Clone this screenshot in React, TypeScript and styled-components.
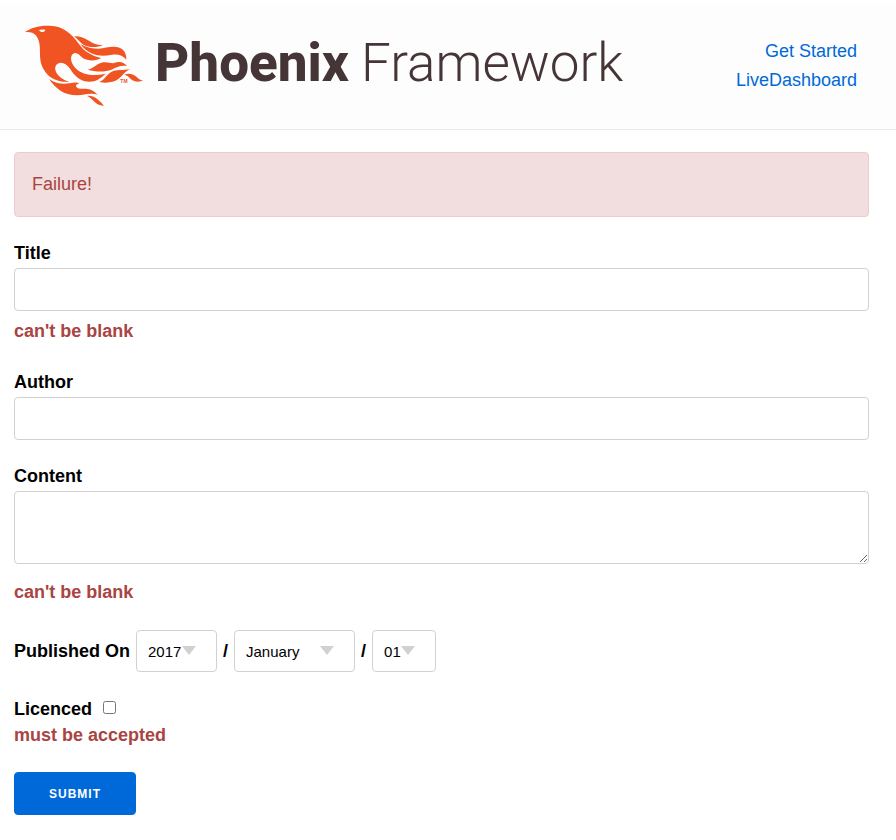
import React from "react";
import styled, { createGlobalStyle } from "styled-components";

const GlobalStyle = createGlobalStyle`
  *, *::before, *::after { box-sizing: border-box; }
  body {
    margin: 0;
    background: #fff;
    color: #000;
    font-family: "Liberation Sans", Arial, sans-serif;
    font-size: 18px;
    line-height: 29px;
  }
`;

const Header = styled.header`
  display: flex;
  justify-content: space-between;
  margin-top: 3px;
  padding: 22px 39px 23px 25px;
  background: #fdfdfd;
  border-bottom: 1px solid #eaeaea;
`;

const Brand = styled.a`
  display: flex;
  align-items: flex-start;
  gap: 12px;
  color: #463536;
  text-decoration: none;
`;

const Bird = styled.svg`
  display: block;
  width: 118px;
  height: 81px;
  fill: #f05423;
`;

const Wordmark = styled.span`
  display: flex;
  gap: 12px;
  font-family: Roboto, sans-serif;
  font-size: 53px;
  line-height: 76px;
  white-space: nowrap;
`;

const WordPart = styled.span<{ $weight: number }>`
  font-weight: ${({ $weight }) => $weight};
`;

const Nav = styled.nav`
  display: flex;
  flex-direction: column;
  align-items: flex-end;
  padding-top: 12px;
`;

const NavLink = styled.a`
  color: #0069d9;
  text-decoration: none;
`;

const Main = styled.main`
  padding: 22px 27px 24px 14px;
`;

const Alert = styled.p`
  margin: 0 0 22px;
  padding: 17px;
  color: #a94442;
  background: #f2dede;
  border: 1px solid #ebccd1;
  border-radius: 4px;
`;

const Field = styled.div`
  display: flex;
  flex-direction: column;
  margin-bottom: 22px;
`;

const Label = styled.label`
  font-weight: 700;
`;

const TextInput = styled.input`
  width: 100%;
  height: 43px;
  padding: 6px 11px;
  font: inherit;
  background: #fff;
  border: 1px solid #d1d1d1;
  border-radius: 4px;
`;

const TextArea = styled.textarea`
  display: block;
  width: 100%;
  height: 73px;
  margin-bottom: 8px;
  padding: 6px 11px;
  font: inherit;
  background: #fff;
  border: 1px solid #d1d1d1;
  border-radius: 4px;
  resize: vertical;
`;

const ErrorText = styled.span`
  margin-top: 6px;
  color: #a94442;
  font-weight: 700;
`;

const DateRow = styled.fieldset`
  display: flex;
  align-items: center;
  gap: 6px;
  margin: 23px 0 24px;
  padding: 0;
  border: 0;
  font-weight: 700;
`;

const SelectBox = styled.span`
  position: relative;
  display: flex;

  &::after {
    content: "";
    position: absolute;
    top: 16px;
    right: 21px;
    border: 7px solid transparent;
    border-top: 9px solid #d1d1d1;
    border-bottom: 0;
    pointer-events: none;
  }
`;

const Select = styled.select`
  appearance: none;
  height: 42px;
  padding: 0 34px 0 11px;
  color: #000;
  font-family: inherit;
  font-size: 15px;
  background: #fff;
  border: 1px solid #d1d1d1;
  border-radius: 4px;
`;

const CheckField = styled.div`
  display: grid;
  margin-bottom: 24px;
  line-height: 26px;
`;

const CheckLine = styled.div`
  display: flex;
  align-items: center;
  gap: 11px;
`;

const Checkbox = styled.input`
  width: 13px;
  height: 13px;
  margin: 0 0 3px;
`;

const CheckError = styled(ErrorText)`
  margin-top: 0;
`;

const SubmitButton = styled.button`
  height: 43px;
  padding: 0 34px;
  color: #fff;
  font-family: inherit;
  font-size: 12px;
  font-weight: 700;
  letter-spacing: 1px;
  text-transform: uppercase;
  background: #0069d9;
  border: 1px solid #0069d9;
  border-radius: 4px;
`;

const months = [
  "January", "February", "March", "April", "May", "June",
  "July", "August", "September", "October", "November", "December",
];
const years = Array.from({ length: 11 }, (_, i) => String(2017 + i));
const days = Array.from({ length: 31 }, (_, i) => String(i + 1).padStart(2, "0"));

function DateSelect({ name, options }: { name: string; options: string[] }) {
  return (
    <SelectBox>
      <Select aria-label={name} defaultValue={options[0]}>
        {options.map((option) => (
          <option key={option}>{option}</option>
        ))}
      </Select>
    </SelectBox>
  );
}

function PhoenixBird() {
  return (
    <Bird viewBox="27 28 354 243" aria-hidden="true">
      <path
        fillRule="evenodd"
        d="M27 49C44 36 70 29 98 30C130 30 150 42 168 60C184 76 196 98 214 110C226 118 240 124 255 127C243 136 220 136 206 130C194 124 188 112 178 112C166 113 163 126 167 139C173 155 186 168 206 174C226 180 248 178 270 174C258 182 246 198 220 198C196 198 180 184 168 168C158 152 148 141 134 141C120 142 115 154 119 166C125 182 142 194 160 198C136 200 110 193 95 177C77 158 72 139 72 116C72 92 72 68 55 55C47 49 37 49 27 49ZM69 43C74 52 86 51 88 42C81 41 75 41 69 43Z"
      />
      <path d="M174 62C190 61 202 65 215 73C229 82 241 88 260 88C247 96 223 96 208 90C193 84 187 71 174 62Z" />
      <path d="M193 85C211 96 230 99 248 99C267 98 281 92 301 94C323 97 332 113 331 132C321 119 305 114 288 117C267 121 250 122 231 115C214 108 202 98 193 85Z" />
      <path d="M215 162C231 160 240 145 256 141C277 136 287 147 302 140C316 137 327 143 333 151C315 147 302 155 286 162C268 169 239 169 215 162Z" />
      <path d="M250 199C266 193 271 177 286 169C301 160 321 165 342 160C327 167 319 181 306 191C293 201 270 203 250 199Z" />
      <path d="M325 177C339 171 354 176 362 184C369 191 374 194 381 194C371 201 354 199 345 191C339 185 335 179 325 177Z" />
      <path d="M99 190C119 204 140 206 160 203C173 201 182 198 191 203C184 205 178 208 181 214C189 224 207 216 224 222C234 225 238 231 246 238C222 230 207 238 183 239C143 239 119 218 99 190Z" />
      <path d="M212 241C229 237 239 246 247 253C255 259 258 264 264 270C245 270 233 256 226 249C221 245 217 242 212 241Z" />
      <text x="313" y="202" fontFamily="Liberation Sans" fontSize="15" fontWeight="700">TM</text>
    </Bird>
  );
}

export default function App() {
  return (
    <>
      <GlobalStyle />
      <Header>
        <Brand href="#" aria-label="Phoenix Framework">
          <PhoenixBird />
          <Wordmark>
            <WordPart $weight={800}>Phoenix</WordPart>
            <WordPart $weight={300}>Framework</WordPart>
          </Wordmark>
        </Brand>
        <Nav>
          <NavLink href="#">Get Started</NavLink>
          <NavLink href="#">LiveDashboard</NavLink>
        </Nav>
      </Header>
      <Main>
        <Alert role="alert">Failure!</Alert>
        <form onSubmit={(event) => event.preventDefault()}>
          <Field>
            <Label htmlFor="title">Title</Label>
            <TextInput id="title" type="text" aria-describedby="title-error" />
            <ErrorText id="title-error">can't be blank</ErrorText>
          </Field>
          <Field>
            <Label htmlFor="author">Author</Label>
            <TextInput id="author" type="text" />
          </Field>
          <Field>
            <Label htmlFor="content">Content</Label>
            <TextArea id="content" aria-describedby="content-error" />
            <ErrorText id="content-error">can't be blank</ErrorText>
          </Field>
          <DateRow aria-labelledby="published-on">
            <span id="published-on">Published On</span>
            <DateSelect name="Year" options={years} />
            <span>/</span>
            <DateSelect name="Month" options={months} />
            <span>/</span>
            <DateSelect name="Day" options={days} />
          </DateRow>
          <CheckField>
            <CheckLine>
              <Label htmlFor="licenced">Licenced</Label>
              <Checkbox id="licenced" type="checkbox" aria-describedby="licenced-error" />
            </CheckLine>
            <CheckError id="licenced-error">must be accepted</CheckError>
          </CheckField>
          <SubmitButton type="submit">Submit</SubmitButton>
        </form>
      </Main>
    </>
  );
}
